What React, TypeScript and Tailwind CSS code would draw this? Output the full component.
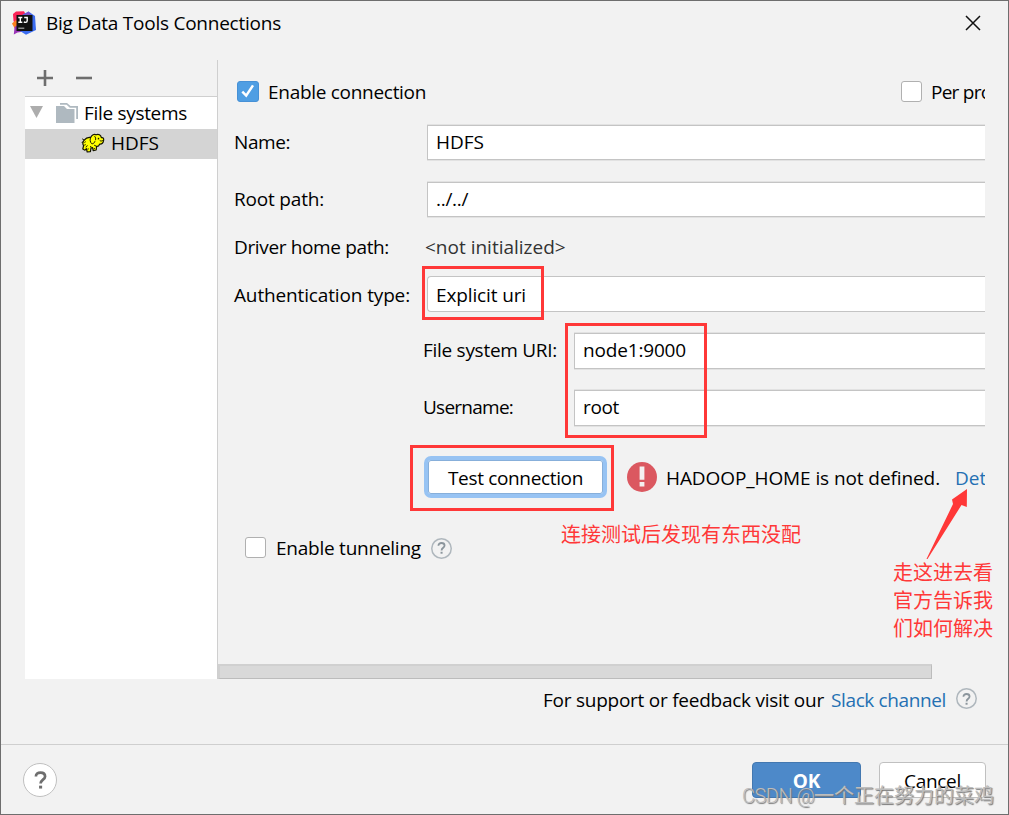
import React from "react";

function IdeaLogo() {
  return (
    <svg width="24" height="24" viewBox="0 0 24 24" className="shrink-0">
      <path d="M1 3 4 0.5 12 0.2 14 4 8 12 4 15 1.5 10Z" fill="#fb2357" />
      <path d="M0 12.5 4 9 9 14 3 18Z" fill="#fc801d" />
      <path d="M2.6 16 7 13 15 20 5.5 21.5 1.8 23.5Z" fill="#9a35b8" />
      <path d="M10 4 16.5 0.5 23 5 24 19 14 23.8 8 20Z" fill="#3b6cf0" />
      <path d="M12 4 16.5 0.5 19 4Z" fill="#7d50c8" />
      <rect x="4.5" y="4" width="16" height="16" fill="#101010" />
      <path d="M6.3 6.5h4M8.3 6.5v5M6.3 11.3h4M12.2 6.5h3v3.3q0 1.6-1.6 1.6-1 0-1.7-.7" fill="none" stroke="#fff" strokeWidth="1.4" />
      <path d="M6.3 17.2h6" stroke="#aaa" strokeWidth="1.2" />
    </svg>
  );
}

function Elephant() {
  return (
    <svg width="24" height="20" viewBox="0 0 24 20" className="shrink-0">
      <path
        d="M3.2 7.2C5 4.8 7.4 4 9.6 4.4 10.8 2 13.2.8 15 1.8 17.6.6 19.8 2 20.4 4.6c1.8-.4 2.6 1 2.2 2.8-.4 2.4-2 4-4 3.8-.6 1.6-1.8 2.4-3 2.2l-.4 3.6-3 .6-.6-3-1.6.4-.6 3.6-3.2.4-.8-3.4-1.4 1.6-2.2-1.2.8-3.4C1.4 11 1.8 9 3.2 7.2Z"
        fill="#ffff00"
        stroke="#141400"
        strokeWidth="1.2"
        strokeLinejoin="round"
      />
      <path
        d="M9.6 4.4c-.8 2-.6 4.8 1 6.2 1.6.6 2.8-.8 3.4-2.4M13.6 3.2c1 1.2 1.4 2.6.8 4M18.8 7.6c1.4.8 2.6.4 3-.6M5 14.4c.2-1 .8-1.6 1.6-1.8M10 14.6l-.4-1.6M15.6 13.4l-2.4-1.2M1.2 5.8l2 1.4M1.6 8.6 1 10"
        fill="none"
        stroke="#141400"
        strokeWidth="1"
      />
      <path d="M3.4 9.6l1.4-1M3.2 12.2l1.6-.6M6.4 16.2l1.4-.4M12.6 16l1.4-.6" stroke="#141400" strokeWidth="0.9" />
      <rect x="16.8" y="4.8" width="1.4" height="1.6" fill="#141400" />
    </svg>
  );
}

function QuestionPath({ className }: { className: string }) {
  return (
    <svg viewBox="0 0 14 20" fill="none" stroke="currentColor" className={className}>
      <path d="M1.9 6.2C1.9 3.3 4 1.7 7 1.7s5.1 1.6 5.1 4.3c0 3.6-5 3.7-5 8" strokeWidth="3" />
      <path d="M5.4 16.3h3.4v3.2H5.4z" fill="currentColor" stroke="none" />
    </svg>
  );
}

function HelpHint() {
  return (
    <span className="flex h-[21px] w-[21px] shrink-0 items-center justify-center rounded-full bg-[#f2f2f2] text-[#8b959c] shadow-[inset_0_0_0_1.5px_#afb7bd]">
      <QuestionPath className="h-[12px] w-[9px]" />
    </span>
  );
}

function CheckBox({ checked = false }: { checked?: boolean }) {
  return checked ? (
    <span className="mb-[2px] flex h-[21px] w-[22px] shrink-0 items-center justify-center rounded-[3px] border border-[#4791d6] bg-[#4f9ee3]">
      <svg width="16" height="16" viewBox="0 0 16 16" fill="none" stroke="#fff" strokeWidth="2.5">
        <path d="M2.3 8.6 6.2 12.6 13 2.4" />
      </svg>
    </span>
  ) : (
    <span className="mb-[2px] h-[21px] w-[21px] shrink-0 rounded-[3px] border border-[#b0b0b0] bg-white" />
  );
}

const field =
  "flex flex-1 items-center border border-r-0 border-[#c4c4c4] bg-white pl-2 shadow-[0_1px_0_#e2e2e2,0_-1px_0_#e2e2e2]";

export default function App() {
  return (
    <div className="relative flex h-[815px] w-[1009px] flex-col overflow-hidden border border-[#6e6e6e] bg-[#f2f2f2] font-['Open_Sans','Noto_Sans_CJK_SC',sans-serif] text-[19px] leading-6 whitespace-nowrap text-black">
      <header className="flex h-[59px] items-start pt-[10px] pr-[27px] pl-[11px]">
        <IdeaLogo />
        <h1 className="ml-[10px] tracking-[-0.24px]">Big Data Tools Connections</h1>
        <svg width="16" height="16" viewBox="0 0 16 16" stroke="#111" strokeWidth="1.5" className="mt-1 ml-auto">
          <path d="M1 1 15 15M15 1 1 15" />
        </svg>
      </header>

      <div className="flex h-[619px] pr-[23px] pl-[24px]">
        <aside className="flex w-[193px] shrink-0 flex-col border-r border-[#cfcfcf]">
          <div className="flex h-[37px] items-center gap-[23px] border-b border-[#cfcfcf] pl-3">
            <svg width="16" height="16" viewBox="0 0 16 16" stroke="#6e6e6e" strokeWidth="2.6">
              <path d="M0 8h16M8 0v16" />
            </svg>
            <svg width="16" height="16" viewBox="0 0 16 16" stroke="#6e6e6e" strokeWidth="2.6">
              <path d="M0 8h16" />
            </svg>
          </div>
          <div className="flex flex-1 flex-col bg-white">
            <div className="flex h-8 items-center pl-[5px]">
              <svg width="13" height="12" viewBox="0 0 13 12" className="mb-[2px]">
                <path d="M0 0h13L6.5 12z" fill="#adadad" />
              </svg>
              <svg width="22" height="20" viewBox="0 0 22 20" fill="#afb9c0" className="ml-[13px]">
                <path d="M0 3h8l3 3h7.5v14H0z" />
                <path d="M4 0h7l3.5 3H22v13h-1.8V4.8h-6.4l-3.2-3H4z" />
              </svg>
              <span className="ml-[6px] tracking-[-0.31px]">File systems</span>
            </div>
            <div className="flex h-[30px] items-center bg-[#d4d4d4] pb-[2px] pl-[56px]">
              <Elephant />
              <span className="ml-[6px]">HDFS</span>
            </div>
          </div>
        </aside>

        <main className="flex flex-1 flex-col overflow-hidden">
          <div className="mb-px flex h-16 shrink-0 items-center pl-[19px]">
            <CheckBox checked />
            <span className="ml-[9px] w-[633px] shrink-0 tracking-[-0.29px]">Enable connection</span>
            <CheckBox />
            <span className="ml-[9px] tracking-[-0.75px]">Per project</span>
          </div>
          <div className="flex h-[35px] pl-4">
            <label className="w-[193px] pt-[5px] tracking-[-0.4px]">Name:</label>
            <div className={field}>
              <span className="pb-px">HDFS</span>
            </div>
          </div>
          <div className="mt-[22px] flex h-[35px] pl-4">
            <label className="w-[193px] pt-[5px] tracking-[-0.19px]">Root path:</label>
            <div className={field}>
              <span className="pb-px tracking-[-0.3px]">../../</span>
            </div>
          </div>
          <div className="flex h-[59px] items-center pt-px pl-4">
            <label className="w-[191px] tracking-[-0.36px]">Driver home path:</label>
            <span className="text-[#333]">&lt;not initialized&gt;</span>
          </div>
          <div className="flex h-9 pl-4">
            <label className="w-[193px] pt-[7px] tracking-[-0.14px]">Authentication type:</label>
            <div className="flex flex-1 items-center rounded-l-[4px] border border-r-0 border-[#c4c4c4] bg-white pl-2">
              <span className="pt-[2px] tracking-[-0.13px]">Explicit uri</span>
            </div>
          </div>
          <div className="mt-[21px] flex h-9 pl-[205px]">
            <label className="w-[151px] pt-[5px] tracking-[-0.28px]">File system URI:</label>
            <div className={field}>
              <span className="pb-[2px] tracking-[-0.17px]">node1:9000</span>
            </div>
          </div>
          <div className="mt-[21px] flex h-9 pl-[205px]">
            <label className="w-[151px] pt-[5px] tracking-[-0.75px]">Username:</label>
            <div className={field}>
              <span className="pb-[2px] tracking-[-0.35px]">root</span>
            </div>
          </div>
          <div className="mt-[30px] flex h-[42px] items-center pl-[206px]">
            <button className="h-[42px] w-[183px] shrink-0 rounded-[7px] border-4 border-[#97c3f3] bg-white pt-[2px] tracking-[-0.34px] shadow-[inset_0_0_0_1px_#87afda]">
              Test connection
            </button>
            <svg width="30" height="30" viewBox="0 0 30 30" className="ml-5 shrink-0">
              <circle cx="15" cy="15" r="15" fill="#db5860" />
              <path d="M12.6 4.5h4.8v13.2h-4.8zM12.6 20h4.8v4.4h-4.8z" fill="#f5f0f0" />
            </svg>
            <span className="ml-[9px] w-[289px] shrink-0 pt-[2px] tracking-[-0.09px]">HADOOP_HOME is not defined.</span>
            <a className="pt-[2px] text-[#2470b3]">Det</a>
          </div>
          <div className="flex h-[100px] items-center pl-[27px]">
            <CheckBox />
            <span className="mr-[10px] ml-[10px] tracking-[-0.24px]">Enable tunneling</span>
            <HelpHint />
          </div>
          <div className="mt-auto h-[15px] w-[714px] border-2 border-r border-b border-[#d0d0d0] border-r-[#bcbcbc] border-b-[#bcbcbc] bg-[#d9d9d9]" />
        </main>
      </div>

      <div className="flex h-[66px] items-start border-b border-[#cfcfcf] pt-[9px] pl-[542px]">
        <span className="w-[288px] shrink-0 tracking-[-0.25px]">For support or feedback visit our</span>
        <a className="mr-[10px] tracking-[-0.38px] text-[#2470b3]">Slack channel</a>
        <HelpHint />
      </div>

      <footer className="flex flex-1 items-start pr-[22px] pl-[22px]">
        <button className="mt-[18px] flex h-[34px] w-[34px] items-center justify-center rounded-full border border-[#c0c0c0] bg-white text-[#6e6e6e]">
          <QuestionPath className="h-[18px] w-[13px]" />
        </button>
        <button className="mt-[17px] ml-auto h-9 w-[109px] rounded-[4px] border border-[#4378b0] bg-[#4d89c9] pt-px font-bold text-white">
          OK
        </button>
        <button className="mt-[17px] ml-[18px] h-9 w-[107px] rounded-[4px] border border-[#c0c0c0] bg-white pt-px tracking-[-0.28px]">
          Cancel
        </button>
      </footer>

      <div className="absolute top-[265px] left-[421px] h-[54px] w-[122px] border-3 border-[#ff3838]" />
      <div className="absolute top-[322px] left-[564px] h-[115px] w-[142px] border-3 border-[#ff3838]" />
      <div className="absolute top-[444px] left-[409px] h-[66px] w-[204px] border-3 border-[#ff3838]" />
      <p className="absolute top-[520px] left-[560px] text-[20px] leading-7 text-[#ff3838]">连接测试后发现有东西没配</p>
      <p className="absolute top-[558px] left-[892px] w-[100px] text-[20px] leading-7 whitespace-normal text-[#ff3838]">
        走这进去看官方告诉我们如何解决
      </p>
      <svg width="42" height="70" viewBox="0 0 42 70" className="absolute top-[488px] left-[925px]">
        <path d="M0.5 70 27 15 26 10.5 41 0 40.8 18 35.5 16 1.5 70Z" fill="#ff3838" />
      </svg>
      <p className="absolute top-[783px] left-[741px] text-[20px] leading-6 text-[#bdbdbd] [text-shadow:1px_1px_1px_#777]">
        <span className="inline-block w-[72px] font-['Roboto',sans-serif] font-light tracking-[-0.5px]">CSDN @</span>
        一个正在努力的菜鸡
      </p>
    </div>
  );
}
